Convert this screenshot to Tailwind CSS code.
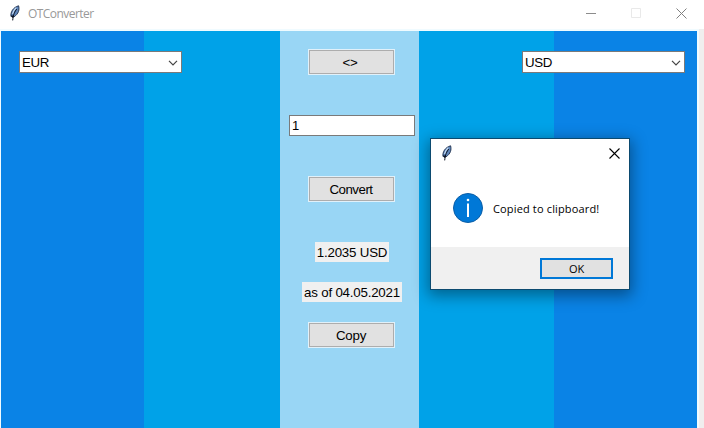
<!DOCTYPE html>
<html lang="en">
<head>
<meta charset="utf-8">
<title>OTConverter</title>
<script src="https://cdn.jsdelivr.net/npm/@tailwindcss/browser@4"></script>
</head>
<body class="relative flex h-[428px] w-[704px] flex-col overflow-hidden bg-white font-['Liberation_Sans',Arial,sans-serif] text-[13.3px] leading-4 tracking-[-0.2px] text-black">
<svg class="hidden">
  <symbol id="feather" viewBox="0 0 12 16">
    <path d="M2 11.5C1.2 7.5 4 2.3 9.6.8c1 3.6.2 8-4.6 11z" fill="#5f86bb" stroke="#1a2b48" stroke-width=".9"/>
    <path d="M7.2 2.6C5.2 4.5 4 6.5 3.6 9" stroke="#c8dcf2" stroke-width="1.3" fill="none"/>
    <path d="M7.8 4C5.8 6.5 4.200 9.500 3.700 15.400" stroke="#0a1220" stroke-width="1" fill="none"/>
    <path d="M2.200 9.800 3.400 13l1.800-1.400" fill="#0a1220"/>
  </symbol>
  <symbol id="chevron" viewBox="0 0 10 6"><path d="M1 .8 5 4.8 9 .8" fill="none" stroke="#444" stroke-width="1.2"/></symbol>
</svg>

<header class="flex h-[29px] shrink-0 items-center pb-px pl-[9px]">
  <svg class="mt-[-2px] h-4 w-3"><use href="#feather"/></svg>
  <h1 class="ml-[7px] font-['Open_Sans','Noto_Sans',sans-serif] text-[12px] tracking-[-0.55px] text-[#999]">OTConverter</h1>
  <div class="mt-[-2px] ml-auto flex items-center pr-[17px]">
    <svg class="h-[11px] w-[11px]" viewBox="0 0 11 11"><path d="M0 5.5h10" stroke="#8c8c8c"/></svg>
    <svg class="ml-[34px] h-[11px] w-[11px]" viewBox="0 0 11 11"><path d="M.5.5h9v9h-9z" fill="none" stroke="#e9e9e9"/></svg>
    <svg class="ml-[34px] h-[11px] w-[11px]" viewBox="0 0 11 11"><path d="M.5.5l10 10M10.5.5l-10 10" stroke="#808080" stroke-width="1"/></svg>
  </div>
</header>

<div class="flex flex-1 bg-[#f0eeee]">
  <div class="mr-[5px] flex flex-1 border-t-2 border-r-2 border-l border-[#f0fbff]">
    <main class="flex flex-1 items-start bg-[linear-gradient(to_right,#0a83e6_143px,#00a2e8_143px_279px,#99d6f5_279px_418px,#00a2e8_418px_553px,#0a83e6_553px)] pl-[18px]">
      <div class="mt-5 flex h-[22px] w-[163px] items-center justify-between border border-[#7a7a7a] bg-white pr-[3px] pl-0.5"><span class="pt-px tracking-[-0.4px]">EUR</span><svg class="mt-px h-1.5 w-2.5"><use href="#chevron"/></svg></div>
      <section class="ml-[107px] flex w-[126px] flex-col pt-[18px]">
        <button class="ml-[19px] h-[26px] w-[87px] border border-[#e1f1fa] bg-[#adadad] p-px"><span class="flex h-full items-center justify-center bg-[#e1e1e1] pt-px pr-[3px]">&lt;&gt;</span></button>
        <div class="mt-10 flex h-[21px] w-full items-center border border-[#7a7a7a] bg-white pl-0.5 text-[13px]">1</div>
        <button class="mt-10 ml-[19px] h-[26px] w-[87px] border border-[#e1f1fa] bg-[#adadad] p-px"><span class="flex h-full items-center justify-center bg-[#e1e1e1] pt-px pr-px tracking-[-0.5px]">Convert</span></button>
        <p class="mt-10 ml-[26px] flex h-5 w-[74px] items-center justify-center bg-[#f0f0f0] pt-px whitespace-nowrap">1.2035 USD</p>
        <p class="mt-5 ml-[13px] flex h-5 w-[100px] items-center justify-center bg-[#f0f0f0] pt-px whitespace-nowrap">as of 04.05.2021</p>
        <button class="mt-5 ml-[19px] h-[26px] w-[87px] border border-[#e1f1fa] bg-[#adadad] p-px"><span class="flex h-full items-center justify-center bg-[#e1e1e1] pt-px pr-px tracking-[-0.2px]">Copy</span></button>
      </section>
      <div class="mt-5 ml-[107px] flex h-[22px] w-[163px] items-center justify-between border border-[#7a7a7a] bg-white pr-[3px] pl-0.5"><span class="pt-px tracking-[-0.4px]">USD</span><svg class="mt-px h-1.5 w-2.5"><use href="#chevron"/></svg></div>
    </main>
  </div>
</div>

<div role="dialog" class="absolute top-[138px] left-[430px] flex h-[152px] w-[200px] flex-col border border-[#0b4a70] bg-white font-['Open_Sans','Noto_Sans',sans-serif] text-[11px] tracking-[0.15px] shadow-[0_4px_14px_2px_rgba(0,0,0,0.38)]">
  <div class="flex h-[28px] items-center justify-between pr-[9px] pl-[10px]">
    <svg class="mt-[-1px] h-4 w-3"><use href="#feather"/></svg>
    <svg class="h-[11px] w-[11px]" viewBox="0 0 11 11"><path d="M.5.5l10 10M10.500.5l-10 10" stroke="#000" stroke-width="1.1"/></svg>
  </div>
  <div class="flex flex-1 items-start pt-[26px] pl-[22px]">
    <svg class="h-[30px] w-[30px]" viewBox="0 0 30 30"><circle cx="15" cy="15" r="14.5" fill="#0078d7" stroke="#0c5ea6"/><path d="M15 10.5V24" stroke="#fff" stroke-width="2"/><circle cx="15" cy="7" r="1.3" fill="#fff"/></svg>
    <p class="mt-2 ml-[10px] whitespace-nowrap">Copied to clipboard!</p>
  </div>
  <div class="flex h-[42px] items-start justify-end bg-[#f0f0f0] pt-[11px] pr-4">
    <button class="flex h-[21px] w-[73px] items-center justify-center border-2 border-[#0078d7] bg-[#e1e1e1] tracking-[-0.1px]">OK</button>
  </div>
</div>
</body>
</html>
